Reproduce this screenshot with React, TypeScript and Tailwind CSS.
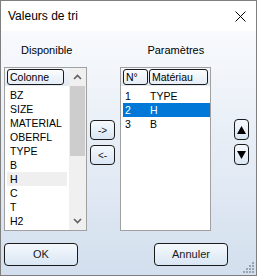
import React from "react";

const left = ["BZ", "SIZE", "MATERIAL", "OBERFL", "TYPE", "B", "H", "C", "T", "H2"];
const right = [
  { n: "1", name: "TYPE" },
  { n: "2", name: "H" },
  { n: "3", name: "B" },
];

const btn =
  "border border-[#1a1a1a] rounded-[4px] bg-gradient-to-b from-[#f5f9fd] to-[#d9e6f4] flex items-center justify-center text-[#1a1a1a]";
const head =
  "h-[16px] border border-[#1a1a1a] rounded-[3px] bg-gradient-to-b from-[#fafcfe] to-[#e6edf6] leading-[14px] pl-[2px] text-black";

const Chevron = ({ down }: { down?: boolean }) => (
  <svg width="9" height="6" viewBox="0 0 9 6">
    <path
      d={down ? "M1 1 L4.5 4.5 L8 1" : "M1 5 L4.5 1.5 L8 5"}
      fill="none"
      stroke="#606060"
      strokeWidth="1.6"
    />
  </svg>
);

const Tri = ({ down }: { down?: boolean }) => (
  <svg width="9" height="8" viewBox="0 0 9 8">
    <path d={down ? "M0 0 H9 L4.5 8 Z" : "M0 8 H9 L4.5 0 Z"} fill="#000" />
  </svg>
);

export default function App() {
  return (
    <div className="relative w-[257px] h-[276px] border border-[#7f7f7f] flex flex-col overflow-hidden font-['Liberation_Sans',Arial,sans-serif] text-[10.5px] text-black">
      {/* title bar */}
      <div className="h-[30px] bg-white flex items-center justify-between pl-[7px] pr-[10px]">
        <span className="text-[12px] text-black">Valeurs de tri</span>
        <svg width="11" height="11" viewBox="0 0 11 11">
          <path d="M0.5 0.5 L10.5 10.5 M10.5 0.5 L0.5 10.5" stroke="#000" strokeWidth="1" />
        </svg>
      </div>

      {/* body */}
      <div className="flex-1 flex flex-col bg-gradient-to-b from-[#f8fafd] to-[#d3dfee]">
        {/* labels */}
        <div className="h-[36px] flex items-end pb-[11px] text-[11px] leading-[12px]">
          <span className="ml-[20px]">Disponible</span>
          <span className="ml-[75px]">Paramètres</span>
        </div>

        {/* lists */}
        <div className="h-[164px] flex">
          {/* left list */}
          <div className="ml-[3px] w-[83px] flex border border-[#a0a0a0] bg-white">
            <div className="flex-1 flex flex-col">
              <div className="h-[18px] bg-gradient-to-b from-[#f3f6fa] to-[#e2e9f2] pl-[2px] pt-[1px]">
                <div className={`${head} w-[57px]`}>Colonne</div>
              </div>
              <div className="pt-[2px] flex flex-col">
                {left.map((l) => (
                  <div
                    key={l}
                    className={`h-[14px] leading-[14px] mx-[2px] pl-[3px] ${l === "H" ? "bg-[#efefef]" : ""}`}
                  >
                    {l}
                  </div>
                ))}
              </div>
            </div>
            <div className="w-[17px] bg-[#f0f0f0] flex flex-col items-center">
              <div className="h-[18px] flex items-center justify-center">
                <Chevron />
              </div>
              <div className="w-[15px] h-[70px] bg-[#cdcdcd]" />
              <div className="flex-1" />
              <div className="h-[18px] flex items-center justify-center">
                <Chevron down />
              </div>
            </div>
          </div>

          {/* move buttons */}
          <div className="w-[33px] flex flex-col pt-[53px] pl-[3px] gap-[5px] text-[10px]">
            <div className={`${btn} w-[25px] h-[20px]`}>-&gt;</div>
            <div className={`${btn} w-[25px] h-[20px]`}>&lt;-</div>
          </div>

          {/* right list */}
          <div className="w-[91px] flex flex-col border border-[#a0a0a0] bg-white">
            <div className="h-[18px] bg-gradient-to-b from-[#f3f6fa] to-[#e2e9f2] pl-[2px] pt-[1px] flex gap-[1px]">
              <div className={`${head} w-[25px]`}>N°</div>
              <div className={`${head} w-[59px]`}>Matériau</div>
            </div>
            <div className="pt-[3px] flex flex-col">
              {right.map((r) => (
                <div
                  key={r.n}
                  className={`h-[14px] leading-[14px] ml-[2px] flex ${r.n === "2" ? "bg-[#0078d7] text-white" : ""}`}
                >
                  <span className="w-[27px] pl-[2px]">{r.n}</span>
                  <span>{r.name}</span>
                </div>
              ))}
            </div>
          </div>

          {/* up / down */}
          <div className="flex-1 flex flex-col pt-[52px] pl-[23px] gap-[4px]">
            <div className={`${btn} w-[15px] h-[21px]`}>
              <Tri />
            </div>
            <div className={`${btn} w-[15px] h-[21px]`}>
              <Tri down />
            </div>
          </div>
        </div>

        {/* bottom buttons */}
        <div className="flex pt-[12px] text-[11px]">
          <div className={`${btn} ml-[3px] w-[74px] h-[23px]`}>OK</div>
          <div className={`${btn} ml-auto mr-[28px] w-[74px] h-[23px]`}>Annuler</div>
        </div>
      </div>

      {/* resize grip */}
      <svg className="absolute right-[2px] bottom-[2px]" width="11" height="11" viewBox="0 0 11 11">
        {[
          [9, 1], [9, 4], [6, 4], [9, 7], [6, 7], [3, 7], [9, 10], [6, 10], [3, 10], [0, 10],
        ].map(([x, y], i) => (
          <rect key={i} x={x} y={y - 1} width="2" height="2" fill="#9aa4b0" />
        ))}
      </svg>
    </div>
  );
}
